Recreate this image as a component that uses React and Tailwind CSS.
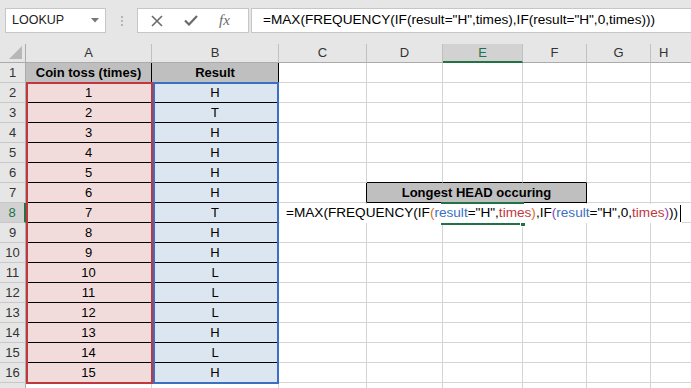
import React from "react";

const FONT = { fontFamily: '"Liberation Sans", Arial, sans-serif' };

const widths = ["w-[26px]", "w-[126px]", "w-[127px]", "w-[88px]", "w-[76px]", "w-[80px]", "w-[64px]", "w-[64px]"];
const letters = ["A", "B", "C", "D", "E", "F", "G", "H"];

const rows = [
    [1, "H"], [2, "T"], [3, "H"], [4, "H"], [5, "H"], [6, "H"], [7, "T"], [8, "H"],
    [9, "H"], [10, "L"], [11, "L"], [12, "L"], [13, "H"], [14, "L"], [15, "H"],
];

const FormulaText = () => (
    <span>
        =MAX(FREQUENCY(IF<span className="text-[#d0702a]">(</span>
        <span className="text-[#3a6fc4]">result</span>="H",
        <span className="text-[#c0373e]">times</span>
        <span className="text-[#d0702a]">)</span>,IF<span className="text-[#8a3fb0]">(</span>
        <span className="text-[#3a6fc4]">result</span>="H",0,
        <span className="text-[#c0373e]">times</span>
        <span className="text-[#8a3fb0]">)</span>))
    </span>
);

const Cell = ({ w, className = "", children }) => (
    <div className={`${w} shrink-0 h-full box-border flex items-center justify-center ${className}`}>
        {children}
    </div>
);

const GridRow = ({ num, cells, highlight }) => (
    <div className="flex h-[20px]">
        <Cell
            w={widths[0]}
            className={`border-b border-[#c8c8c8] text-[13px] ${highlight ? "bg-[#d2d2d2] text-[#217346] border-r-2 border-r-[#217346]" : "bg-[#e6e6e6] text-[#333] border-r border-r-[#ababab]"}`}
        >
            {num}
        </Cell>
        {cells}
    </div>
);

const blank = (i, extra = "") => (
    <Cell key={i} w={widths[i]} className={`border-r border-b border-[#d4d4d4] ${extra}`} />
);

export default function App() {
    return (
        <div className="w-[691px] h-[388px] overflow-hidden bg-white relative text-black" style={FONT}>
            {/* formula bar */}
            <div className="h-[44px] bg-[#e6e6e6] flex items-start pt-[8px] pl-[5px]">
                <div className="w-[101px] h-[25px] bg-white border border-[#c6c6c6] flex items-center pl-[6px] pr-[6px] text-[12.5px] text-[#222]">
                    <span className="flex-1">LOOKUP</span>
                    <svg width="8" height="5" viewBox="0 0 8 5"><path d="M0 0h8L4 4.5z" fill="#777" /></svg>
                </div>
                <div className="w-[31px] h-[25px] flex flex-col items-center justify-center gap-[2px]">
                    <div className="w-[2px] h-[2px] bg-[#b5b5b5]" />
                    <div className="w-[2px] h-[2px] bg-[#b5b5b5]" />
                    <div className="w-[2px] h-[2px] bg-[#b5b5b5]" />
                </div>
                <div className="w-[112px] h-[25px] bg-white border border-[#c6c6c6] flex items-center pl-[13px] gap-[21px]">
                    <svg width="12" height="12" viewBox="0 0 12 12"><path d="M1 1l10 10M11 1L1 11" stroke="#6a6a6a" strokeWidth="1.6" /></svg>
                    <svg width="14" height="11" viewBox="0 0 14 11"><path d="M1 5.5l4 4L13 1" stroke="#6a6a6a" strokeWidth="2.2" fill="none" /></svg>
                    <span className="text-[15px] italic text-[#6a6a6a]" style={{ fontFamily: '"Liberation Serif", serif' }}>fx</span>
                </div>
                <div className="ml-[2px] flex-1 h-[25px] bg-white border border-[#c6c6c6] border-r-0 flex items-center pl-[11px] text-[13.6px]">
                    =MAX(FREQUENCY(IF(result="H",times),IF(result="H",0,times)))
                </div>
            </div>

            {/* column headers */}
            <div className="flex h-[19px] bg-[#e6e6e6] text-[13px] text-[#333]">
                <div className={`${widths[0]} shrink-0 h-full border-r border-b border-[#ababab] relative`}>
                    <svg className="absolute right-[3px] bottom-[3px]" width="13" height="13" viewBox="0 0 13 13"><path d="M13 0v13H0z" fill="#b7b7b7" /></svg>
                </div>
                {letters.map((l, i) =>
                    i < 7 ? (
                        <Cell
                            key={l}
                            w={widths[i + 1]}
                            className={`border-r border-[#c0c0c0] ${l === "E" ? "bg-[#d2d2d2] text-[#217346] border-b-2 border-b-[#217346]" : "border-b border-b-[#ababab]"}`}
                        >
                            {l}
                        </Cell>
                    ) : (
                        <div key={l} className="flex-1 h-full border-b border-[#ababab] pl-[8px] flex items-center">{l}</div>
                    )
                )}
            </div>

            {/* row 1 */}
            <GridRow
                num={1}
                cells={[
                    <Cell key="a" w={widths[1]} className="bg-[#bfbfbf] border-r border-b border-black font-bold text-[13px]">Coin toss (times)</Cell>,
                    <Cell key="b" w={widths[2]} className="bg-[#bfbfbf] border-r border-b border-black font-bold text-[13px]">Result</Cell>,
                    blank(3), blank(4), blank(5), blank(6), blank(7),
                    <div key="h" className="flex-1 border-b border-[#d4d4d4]" />,
                ]}
            />

            {rows.map(([n, r], idx) => {
                const rowNum = idx + 2;
                return (
                    <GridRow
                        key={rowNum}
                        num={rowNum}
                        highlight={rowNum === 8}
                        cells={[
                            <Cell key="a" w={widths[1]} className="bg-[#f2dcdb] border-r border-b border-black text-[13px]">{n}</Cell>,
                            <Cell key="b" w={widths[2]} className="bg-[#dce6f1] border-r border-b border-black text-[13px]">{r}</Cell>,
                            rowNum === 7 ? (
                                [
                                    <Cell key="c" w={widths[3]} className="border-r border-b border-r-black border-b-[#d4d4d4]" />,
                                    <div key="m" className="w-[220px] shrink-0 h-full box-border bg-[#bfbfbf] border-r border-b border-black font-bold text-[13px] flex items-center justify-center">
                                        Longest HEAD occuring
                                    </div>,
                                ]
                            ) : rowNum === 6 ? (
                                [blank(3), blank(4, "border-b-black"), blank(5, "border-b-black"), blank(6, "border-b-black")]
                            ) : (
                                [blank(3), blank(4), blank(5), blank(6)]
                            ),
                            blank(7),
                            <div key="h" className="flex-1 border-b border-[#d4d4d4]" />,
                        ]}
                    />
                );
            })}

            {/* row 17, only its top edge shows */}
            <GridRow
                num=""
                cells={[blank(1), blank(2), blank(3), blank(4), blank(5), blank(6), blank(7)]}
            />

            {/* range highlights */}
            <div className="absolute left-[26px] top-[82px] w-[127px] h-[302px] border-2 border-[#c0373e]" />
            <div className="absolute left-[153px] top-[82px] w-[126px] h-[302px] border-2 border-[#3a6fc4]" />

            {/* active cell E8 */}
            <div className="absolute left-[441px] top-[202px] w-[83px] h-[23px] border-2 border-[#217346]" />
            <div className="absolute left-[520px] top-[222px] w-[6px] h-[5px] bg-[#217346] border border-white" />

            {/* in-cell editor */}
            <div className="absolute left-[280px] top-[204px] w-[402px] h-[19px] bg-white flex items-center pl-[6px] text-[13.6px] whitespace-nowrap">
                <FormulaText />
                <div className="w-px h-[17px] bg-black ml-[2px]" />
            </div>
        </div>
    );
}
